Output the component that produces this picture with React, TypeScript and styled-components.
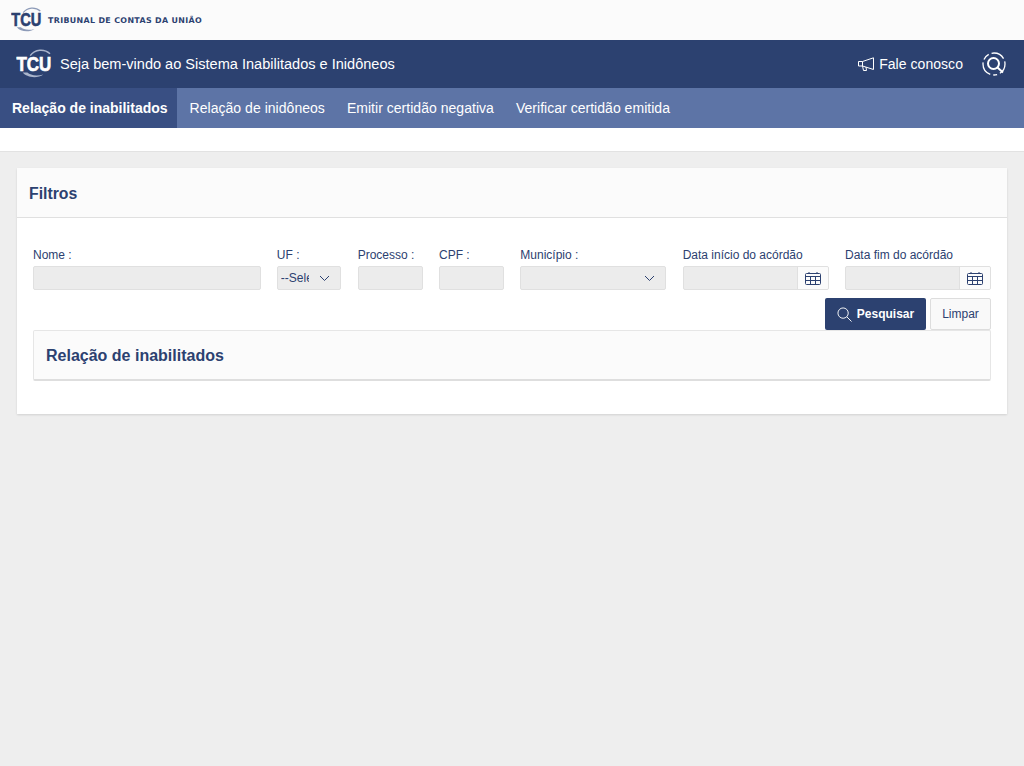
import React from "react";
import styled, { createGlobalStyle } from "styled-components";

const GlobalStyle = createGlobalStyle`
  html, body {
    margin: 0;
    padding: 0;
    min-height: 766px;
    background: #eeeeee;
    font-family: "Liberation Sans", Arial, sans-serif;
    overflow: hidden;
  }
`;

const NAVY = "#2c4170";

const TopBar = styled.div`
  height: 40px;
  background: #fbfbfb;
  display: flex;
  align-items: center;
  padding-left: 11px;
  gap: 6px;
`;

const OrgName = styled.span`
  font-size: 7.9px;
  font-weight: 700;
  letter-spacing: 0.35px;
  color: ${NAVY};
  font-family: "DejaVu Sans", sans-serif;
  white-space: nowrap;
`;

const Header = styled.header`
  height: 48px;
  background: ${NAVY};
  display: flex;
  align-items: center;
  padding: 0 18px 0 16px;
  color: #fff;
`;

const SystemTitle = styled.span`
  font-size: 14.55px;
  margin-left: 8px;
  flex: 1;
`;

const Contact = styled.a`
  display: flex;
  align-items: center;
  gap: 4px;
  font-size: 14px;
  letter-spacing: 0.05px;
  margin-right: 19px;
`;

const Nav = styled.nav`
  height: 40px;
  background: #5d74a6;
  display: flex;
`;

const NavItem = styled.a<{ $active?: boolean }>`
  display: flex;
  align-items: center;
  padding: ${(p) => (p.$active ? "0 9px 0 12px" : "0 11px 0 13px")};
  margin-right: ${(p) => (p.$active ? "0" : "-2px")};
  font-size: 14px;
  letter-spacing: ${(p) => (p.$active ? "0" : "0.03px")};
  color: #fff;
  font-weight: ${(p) => (p.$active ? 700 : 400)};
  background: ${(p) => (p.$active ? "#394f83" : "transparent")};
`;

const Band = styled.div`
  height: 23px;
  background: #fff;
  border-bottom: 1px solid #e2e2e2;
`;

const Card = styled.section`
  margin: 16px 17px 0;
  height: 246px;
  box-sizing: border-box;
  background: #fff;
  box-shadow: 0 1px 2px rgba(0, 0, 0, 0.12);
`;

const CardHeader = styled.div`
  height: 50px;
  box-sizing: border-box;
  background: #fbfbfb;
  border-bottom: 1px solid #e0e0e0;
  display: flex;
  align-items: center;
  padding: 2px 0 0 12px;
  font-size: 15.8px;
  font-weight: 700;
  color: ${NAVY};
`;

const CardBody = styled.div`
  padding: 30px 16px 0;
`;

const FilterGrid = styled.div`
  display: grid;
  grid-template-columns: 227.5px 64.5px 65px 65px 146px 146px 146px;
  column-gap: 16.33px;
`;

const Field = styled.div`
  display: flex;
  flex-direction: column;
`;

const Label = styled.label`
  font-size: 12px;
  line-height: 14px;
  height: 14px;
  color: ${NAVY};
  margin-bottom: 4px;
  white-space: nowrap;
`;

const Control = styled.div`
  height: 24px;
  box-sizing: border-box;
  background: #ececec;
  border: 1px solid #e0e0e0;
  border-radius: 2px;
  display: flex;
  align-items: center;
  justify-content: space-between;
  overflow: hidden;
  font-size: 12px;
  color: ${NAVY};
`;

const SelectText = styled.span`
  width: 28px;
  margin-left: 3px;
  overflow: hidden;
  white-space: nowrap;
`;

const Chevron = styled.svg`
  margin-right: 10px;
  flex-shrink: 0;
`;

const CalendarAddon = styled.div`
  width: 30px;
  height: 100%;
  background: #fbfbfb;
  border-left: 1px solid #e0e0e0;
  display: flex;
  align-items: center;
  justify-content: center;
`;

const Actions = styled.div`
  display: flex;
  justify-content: flex-end;
  gap: 4px;
  margin-top: 8px;
`;

const SearchButton = styled.button`
  width: 101px;
  height: 32px;
  background: ${NAVY};
  border: 0;
  border-radius: 2px;
  color: #fff;
  font: 700 12px "Liberation Sans", Arial, sans-serif;
  display: flex;
  align-items: center;
  justify-content: center;
  gap: 5px;
  padding: 0;
`;

const ClearButton = styled.button`
  width: 61px;
  height: 32px;
  box-sizing: border-box;
  background: #f9f9f9;
  border: 1px solid #dddddd;
  border-radius: 2px;
  color: ${NAVY};
  font: 400 12px "Liberation Sans", Arial, sans-serif;
  padding: 0;
`;

const ResultsPanel = styled.div`
  height: 51px;
  box-sizing: border-box;
  background: #fbfbfb;
  border: 1px solid #e6e6e6;
  border-bottom: 2px solid #dedede;
  border-radius: 2px;
  display: flex;
  align-items: center;
  padding: 1px 0 0 12px;
  font-size: 16px;
  font-weight: 700;
  color: ${NAVY};
`;

const LogoSvg = styled.svg`
  flex-shrink: 0;
`;

const Logo: React.FC<{ width: number; letters: string; ring: string }> = ({ width, letters, ring }) => (
  <LogoSvg width={width} height={(width * 26) / 32} viewBox="0 0 38 31" aria-hidden="true">
    <path d="M15 7 C20 0 30 -0.5 36 5" fill="none" stroke={ring} strokeWidth="1.5" />
    <path d="M7 25 C11 30 22 32 29 27 C22 29 15 28 12 25 Z" fill={ring} />
    <text
      x="0.4"
      y="19.8"
      transform="scale(1 1.2)"
      fontFamily="'Liberation Sans', Arial, sans-serif"
      fontWeight="700"
      fontSize="18"
      fill={letters}
      stroke={letters}
      strokeWidth="0.6"
    >
      TCU
    </text>
  </LogoSvg>
);

const Megaphone = () => (
  <svg width="17" height="15" viewBox="0 0 17 15" fill="none" stroke="#fff" strokeWidth="1" aria-hidden="true">
    <path d="M0.5 4.5 H4.5 L15.5 0.8 V12.5 L4.5 9 H0.5 Z" />
    <path d="M4.5 4.5 V9" />
    <path d="M4.5 9 L5.5 13.5 H8.5 L8 10" />
  </svg>
);

const SiteSearch = () => (
  <svg width="24" height="24" viewBox="0 0 24 24" fill="none" stroke="#fff" aria-hidden="true">
    <circle cx="12" cy="12" r="11" strokeWidth="1.3" strokeDasharray="11 3 4 3 15 3 7 3 14 3" />
    <circle cx="11.5" cy="11.5" r="5.5" strokeWidth="2" />
    <path d="M15.5 15.5 L21 20.5" strokeWidth="2" />
  </svg>
);

const ChevronDown = () => (
  <Chevron width="11" height="7" viewBox="0 0 11 7" fill="none" stroke={NAVY} strokeWidth="1">
    <path d="M1 1 L5.5 5.5 L10 1" />
  </Chevron>
);

const CalendarIcon = () => (
  <svg width="16" height="13" viewBox="0 0 16 13" fill="none" stroke={NAVY} strokeWidth="1" aria-hidden="true">
    <rect x="0.5" y="1.5" width="15" height="11" rx="1" />
    <path d="M0.5 4.5 H15.5 M0.5 8.5 H15.5 M5.5 4.5 V12.5 M10.5 4.5 V12.5 M4 0 V1.5 M12 0 V1.5" />
  </svg>
);

const SearchIcon = () => (
  <svg width="15" height="15" viewBox="0 0 16 16" fill="none" stroke="#fff" strokeWidth="1" aria-hidden="true">
    <circle cx="6.5" cy="6.5" r="5.5" />
    <path d="M10.5 10.5 L15.5 15.5" />
  </svg>
);

const navItems = ["Relação de inidôneos", "Emitir certidão negativa", "Verificar certidão emitida"];

export default function App() {
  return (
    <>
      <GlobalStyle />
      <TopBar>
        <Logo width={31} letters={NAVY} ring="#8d9bb8" />
        <OrgName>TRIBUNAL DE CONTAS DA UNIÃO</OrgName>
      </TopBar>
      <Header>
        <Logo width={36} letters="#ffffff" ring="#aab5cc" />
        <SystemTitle>Seja bem-vindo ao Sistema Inabilitados e Inidôneos</SystemTitle>
        <Contact>
          <Megaphone />
          Fale conosco
        </Contact>
        <SiteSearch />
      </Header>
      <Nav>
        <NavItem $active>Relação de inabilitados</NavItem>
        {navItems.map((item) => (
          <NavItem key={item}>{item}</NavItem>
        ))}
      </Nav>
      <Band />
      <Card>
        <CardHeader>Filtros</CardHeader>
        <CardBody>
          <FilterGrid>
            <Field>
              <Label>Nome :</Label>
              <Control />
            </Field>
            <Field>
              <Label>UF :</Label>
              <Control>
                <SelectText>--Selecione</SelectText>
                <ChevronDown />
              </Control>
            </Field>
            <Field>
              <Label>Processo :</Label>
              <Control />
            </Field>
            <Field>
              <Label>CPF :</Label>
              <Control />
            </Field>
            <Field>
              <Label>Município :</Label>
              <Control>
                <span />
                <ChevronDown />
              </Control>
            </Field>
            <Field>
              <Label>Data início do acórdão</Label>
              <Control>
                <span />
                <CalendarAddon>
                  <CalendarIcon />
                </CalendarAddon>
              </Control>
            </Field>
            <Field>
              <Label>Data fim do acórdão</Label>
              <Control>
                <span />
                <CalendarAddon>
                  <CalendarIcon />
                </CalendarAddon>
              </Control>
            </Field>
          </FilterGrid>
          <Actions>
            <SearchButton>
              <SearchIcon />
              Pesquisar
            </SearchButton>
            <ClearButton>Limpar</ClearButton>
          </Actions>
          <ResultsPanel>Relação de inabilitados</ResultsPanel>
        </CardBody>
      </Card>
    </>
  );
}
